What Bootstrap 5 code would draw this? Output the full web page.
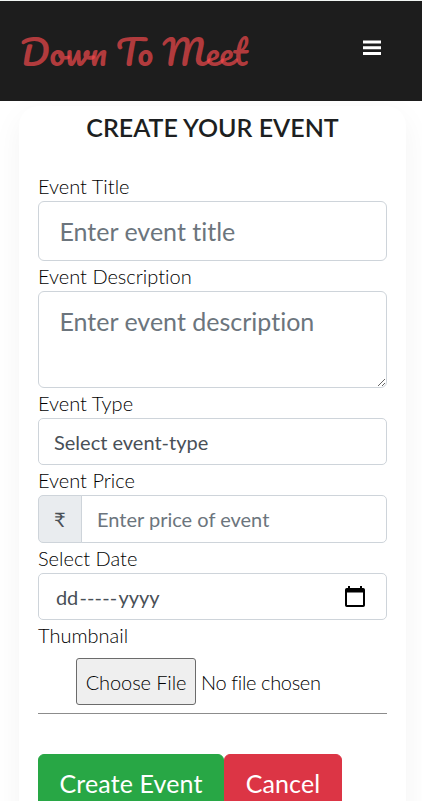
<!DOCTYPE html>
<html lang="en">
<head>
<meta charset="utf-8">
<meta name="viewport" content="width=device-width, initial-scale=1">
<title>Down To Meet</title>
<link href="https://cdn.jsdelivr.net/npm/bootstrap@5.3.0/dist/css/bootstrap.min.css" rel="stylesheet">
<style>
html { font-size: 20px; overflow: hidden; }
body { font-family: Lato, sans-serif; color: #212529; height: 802px; overflow: hidden; }
.site-bar { background: #1d1d1d; height: 101px; border-top: 1px solid #f1f5f3; padding: 0 40px 0 20px; position: relative; z-index: 1; }
.brand-script { font: 400 35px/1 Pacifico, Lato, cursive; color: rgba(255,75,78,.68); }
.menu-btn { width: 19px; height: 16px; margin-top: -6px; }
.page-view { height: 700px; overflow: hidden; padding-top: 5px; }
.event-card { margin: 0 16px 0 19px; padding: 6px 19px 0; border-radius: 20px 20px 0 0; box-shadow: 0 10px 30px rgba(0,0,0,.05); height: 900px; }
.event-heading { font-size: 25px; line-height: 30px; font-weight: 600; margin-bottom: 29px; color: #1d1f21; }
.field-label { display: block; font-weight: 300; line-height: 30px; color: #000; font-variant-ligatures: none; }
.form-control, .input-group-text { border-color: #ced4da; border-radius: 5px; color: #495057; }
.form-control { font-variant-ligatures: none; }
.form-control::placeholder { color: #6c757d; }
.form-control-lg { border-radius: 6px; min-height: 0; padding: 11px 19px 9px 20.5px; }
textarea.form-control-lg { display: block; height: 97px; }
div.form-control { padding-top: 8px; padding-bottom: 7px; height: 47px; }
.input-group { height: 48.5px; }
.input-group-text { background: #e9ecef; width: 44px; padding: 0 0 0 15px; }
.date-text { padding-left: 2px; letter-spacing: -.1px; }
.date-dashes { letter-spacing: .1px; }
.cal-icon { margin-right: 6px; }
.file-row { height: 64px; padding: 8px 0 0 38px; border-bottom: 1px solid #8c8c8c; margin-bottom: 40px; font-weight: 300; color: #000; }
.file-btn { width: 120px; height: 47px; background: #efefef; border: 1px solid #6b6b6b; border-radius: 3px; font-weight: 300; color: #000; margin-right: 5px; letter-spacing: -.1px; }
.file-name { line-height: 49px; letter-spacing: -.35px; }
.btn-lg { border-radius: 6px; padding: 10px 0; border-width: 1px; letter-spacing: .12px; }
.btn-success { background: #28a745; border-color: #28a745; width: 186px; }
.btn-danger { background: #dc3545; border-color: #dc3545; width: 118px; }
</style>
</head>
<body>
<nav class="site-bar d-flex align-items-center justify-content-between">
  <a class="brand-script text-decoration-none text-nowrap" href="#">Down To Meet</a>
  <button class="menu-btn btn p-0 border-0 d-flex" aria-label="Menu">
    <svg width="19" height="16" viewBox="0 0 19 16" fill="#fff"><path d="M0 .5h18v3H0zM0 6.200h18v3H0zM0 12h18v3H0z"/></svg>
  </button>
</nav>
<div class="page-view">
<main class="event-card">
  <h1 class="event-heading text-center">CREATE YOUR EVENT</h1>
  <form>
    <label class="field-label" for="title">Event Title</label>
    <input id="title" class="form-control form-control-lg" placeholder="Enter event title">
    <label class="field-label" for="desc">Event Description</label>
    <textarea id="desc" class="form-control form-control-lg" placeholder="Enter event description"></textarea>
    <span class="field-label">Event Type</span>
    <div class="form-control">Select event-type</div>
    <label class="field-label" for="price">Event Price</label>
    <div class="input-group">
      <span class="input-group-text">₹</span>
      <input id="price" class="form-control" placeholder="Enter price of event">
    </div>
    <span class="field-label">Select Date</span>
    <div class="form-control d-flex align-items-center justify-content-between">
      <span class="date-text">dd<span class="date-dashes">&#8202;-----&#8202;</span>yyyy</span>
      <svg class="cal-icon" width="20" height="22" viewBox="0 0 20 22"><path d="M3 0h2v2h10V0h2v2h1.200Q20 2 20 3.800v15.400Q20 21 18.200 21H1.800Q0 21 0 19.200V3.800Q0 2 1.800 2H3zM2 6.500V19h16V6.500z" fill="#000" fill-rule="evenodd"/></svg>
    </div>
    <span class="field-label">Thumbnail</span>
    <div class="file-row d-flex align-items-start">
      <button type="button" class="file-btn p-0 text-nowrap">Choose File</button>
      <span class="file-name">No file chosen</span>
    </div>
    <div class="d-flex">
      <button type="button" class="btn btn-success btn-lg">Create Event</button>
      <button type="button" class="btn btn-danger btn-lg">Cancel</button>
    </div>
  </form>
</main>
</div>
<script src="https://cdn.jsdelivr.net/npm/bootstrap@5.3.0/dist/js/bootstrap.bundle.min.js"></script>
</body>
</html>
